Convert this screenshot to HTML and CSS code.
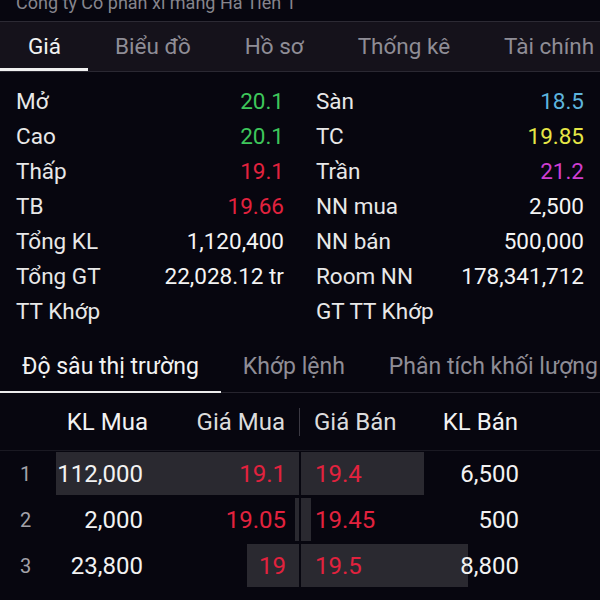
FILE: index.html
```html
<!DOCTYPE html>
<html lang="vi">
  <head>
    <meta name="viewport" content="width=device-width, initial-scale=1" />
    <title>HT1 - Giá</title>
    <link rel="stylesheet" href="styles.css">
  </head>
  <body>

    <div class="company"><span>Công ty Cổ phần xi măng Hà Tiên 1</span></div>

    <nav class="tabs">
      <a class="tab active">Giá</a>
      <a class="tab">Biểu đồ</a>
      <a class="tab">Hồ sơ</a>
      <a class="tab">Thống kê</a>
      <a class="tab">Tài chính</a>
    </nav>

    <section class="stats">
      <div class="stats-col">
        <div class="stat"><span>Mở</span><span class="up">20.1</span></div>
        <div class="stat"><span>Cao</span><span class="up">20.1</span></div>
        <div class="stat"><span>Thấp</span><span class="down">19.1</span></div>
        <div class="stat"><span>TB</span><span class="down">19.66</span></div>
        <div class="stat"><span>Tổng KL</span><span>1,120,400</span></div>
        <div class="stat"><span>Tổng GT</span><span>22,028.12 tr</span></div>
        <div class="stat"><span>TT Khớp</span><span></span></div>
      </div>
      <div class="stats-col">
        <div class="stat"><span>Sàn</span><span class="floor">18.5</span></div>
        <div class="stat"><span>TC</span><span class="ref">19.85</span></div>
        <div class="stat"><span>Trần</span><span class="ceil">21.2</span></div>
        <div class="stat"><span>NN mua</span><span>2,500</span></div>
        <div class="stat"><span>NN bán</span><span>500,000</span></div>
        <div class="stat"><span>Room NN</span><span>178,341,712</span></div>
        <div class="stat"><span>GT TT Khớp</span><span></span></div>
      </div>
    </section>

    <nav class="subtabs">
      <a class="subtab active">Độ sâu thị trường</a>
      <a class="subtab">Khớp lệnh</a>
      <a class="subtab">Phân tích khối lượng</a>
    </nav>

    <div class="book">
      <div class="book-head">
        <div class="bid"><span class="idx"></span><span class="vol">KL Mua</span><span class="price">Giá Mua</span></div>
        <span class="sep"></span>
        <div class="ask"><span class="price">Giá Bán</span><span class="vol">KL Bán</span></div>
      </div>

      <div class="book-row">
        <div class="bid" style="--w: 243px"><span class="idx">1</span><span class="vol">112,000</span><span class="price down">19.1</span></div>
        <div class="ask" style="--w: 123px"><span class="price down">19.4</span><span class="vol">6,500</span></div>
      </div>
      <div class="book-row">
        <div class="bid" style="--w: 4px"><span class="idx">2</span><span class="vol">2,000</span><span class="price down">19.05</span></div>
        <div class="ask" style="--w: 10px"><span class="price down">19.45</span><span class="vol">500</span></div>
      </div>
      <div class="book-row">
        <div class="bid" style="--w: 52px"><span class="idx">3</span><span class="vol">23,800</span><span class="price down">19</span></div>
        <div class="ask" style="--w: 167px"><span class="price down">19.5</span><span class="vol">8,800</span></div>
      </div>
    </div>

  </body>
</html>
```

FILE: styles.css
```css
body {
    margin: 0;
    background-color: #07060f;
    color: #eeeeee;
    font-family: Roboto, "Noto Sans", sans-serif;
    overflow: hidden;
}
a {
    text-decoration: none;
    cursor: pointer;
}

/* --- header --- */
.company {
    height: 21px;
    overflow: hidden;
    padding-left: 16px;
}
.company span {
    display: block;
    margin-top: -6px;
    font-size: 18px;
    line-height: 18px;
    color: #86858d;
}

.tabs {
    display: flex;
    background-color: #15121b;
    border-top: 1px solid #2c2a34;
    border-bottom: 1px solid #2a2832;
    padding-top: 10px;
    white-space: nowrap;
}
.tab {
    padding: 0 27px 8px;
    font-size: 22.5px;
    line-height: 28px;
    color: #8f8d96;
    border-bottom: 3px solid transparent;
}
.tab:first-child {
    padding-left: 28px;
}
.tab.active {
    color: #f2f2f2;
    border-bottom-color: #f0f0f0;
}

/* --- stats --- */
.stats {
    display: flex;
    padding-top: 12px;
}
.stats-col {
    flex: 1;
    padding: 0 16px;
}
.stat {
    display: flex;
    justify-content: space-between;
    font-size: 22.5px;
    line-height: 35px;
    color: #e8e8e8;
}
.stat span:last-child {
    color: #f4f4f4;
}

.up { color: #3ec65b !important; }
.down { color: #e2223e !important; }
.floor { color: #5db4dd !important; }
.ref { color: #e6e646 !important; }
.ceil { color: #cf3ed1 !important; }

/* --- sub tabs --- */
.subtabs {
    display: flex;
    padding-top: 24px;
    box-shadow: inset 0 -1px 0 #26242e;
    white-space: nowrap;
}
.subtab {
    padding: 0 22px 10px;
    font-size: 23px;
    line-height: 28px;
    color: #8f8d96;
    border-bottom: 2px solid transparent;
}
.subtab.active {
    color: #f2f2f2;
    border-bottom-color: #ececec;
}

/* --- order book --- */
.book-head {
    display: flex;
    align-items: center;
    height: 56px;
    padding-top: 1px;
    border-bottom: 1px solid #1a1922;
    font-size: 24px;
    color: #dcdcdc;
}
.book-head .bid,
.book-head .ask {
    height: 100%;
}
.book-head .vol {
    width: 92px;
}
.book-head .bid .price {
    padding-right: 14px;
}
.book-head .ask .price {
    padding-left: 13px;
}
.book-head .ask .vol {
    padding-right: 82px;
}
.sep {
    width: 2px;
    height: 28px;
    box-sizing: border-box;
    border-left: 1px solid #3b3943;
}

.book-row {
    display: flex;
    gap: 2px;
    height: 46px;
    padding: 1px 0 2px;
    box-sizing: border-box;
    font-size: 24px;
}
.book-row:first-of-type {
    margin-top: 1px;
}

.bid, .ask {
    flex: 1;
    display: flex;
    align-items: center;
}
.book-row .bid {
    background: linear-gradient(to left, #2a2930 var(--w), transparent var(--w));
}
.book-row .ask {
    background: linear-gradient(to right, #2a2930 var(--w), transparent var(--w));
}

.idx {
    width: 56px;
    padding-left: 20px;
    box-sizing: border-box;
    font-size: 20px;
    color: #a3a2a9;
}
.vol {
    width: 87px;
    text-align: right;
    color: #f2f2f2;
}
.bid .price {
    flex: 1;
    text-align: right;
    padding-right: 13px;
}
.ask .price {
    flex: 1;
    padding-left: 14px;
}
.ask .vol {
    width: auto;
    padding-right: 81px;
}
```
